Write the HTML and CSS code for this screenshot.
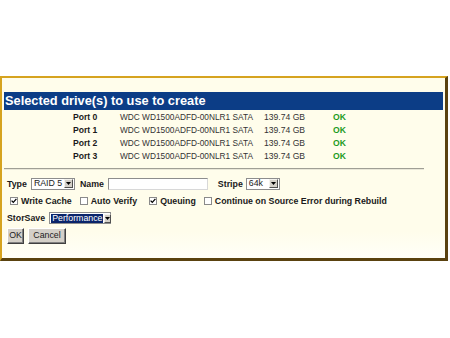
FILE: index.html
```html
<!DOCTYPE html>
<html>
<head>
<meta charset="utf-8">
<link rel="stylesheet" href="styles.css">
</head>
<body>
<div class="panel">
  <div class="title">Selected drive(s) to use to create</div>
  <div class="drives">
    <div class="drive"><span class="port">Port 0</span><span class="model">WDC WD1500ADFD-00NLR1 SATA</span><span class="size">139.74 GB</span><span class="ok">OK</span></div>
    <div class="drive"><span class="port">Port 1</span><span class="model">WDC WD1500ADFD-00NLR1 SATA</span><span class="size">139.74 GB</span><span class="ok">OK</span></div>
    <div class="drive"><span class="port">Port 2</span><span class="model">WDC WD1500ADFD-00NLR1 SATA</span><span class="size">139.74 GB</span><span class="ok">OK</span></div>
    <div class="drive"><span class="port">Port 3</span><span class="model">WDC WD1500ADFD-00NLR1 SATA</span><span class="size">139.74 GB</span><span class="ok">OK</span></div>
  </div>
  <div class="rule"></div>
  <div class="form">
    <div class="row r-type">
      <span class="lbl">Type</span>
      <span class="sel w-raid"><span class="val">RAID 5</span><span class="drop"><svg width="5" height="3" viewBox="0 0 5 3"><path d="M0 0H5L2.5 3Z" fill="#000"/></svg></span></span>
      <span class="lbl l-name">Name</span>
      <span class="txt"></span>
      <span class="lbl l-stripe">Stripe</span>
      <span class="sel w-stripe"><span class="val">64k</span><span class="drop"><svg width="5" height="3" viewBox="0 0 5 3"><path d="M0 0H5L2.5 3Z" fill="#000"/></svg></span></span>
    </div>
    <div class="row r-checks">
      <span class="chk c1"><span class="box"><svg width="6" height="6" viewBox="0 0 6 6"><path d="M0.6 2.6L2.3 4.4L5.4 0.9" stroke="#000" stroke-width="1.3" fill="none"/></svg></span><span class="lbl">Write Cache</span></span>
      <span class="chk c2"><span class="box"></span><span class="lbl">Auto Verify</span></span>
      <span class="chk c3"><span class="box"><svg width="6" height="6" viewBox="0 0 6 6"><path d="M0.6 2.6L2.3 4.4L5.4 0.9" stroke="#000" stroke-width="1.3" fill="none"/></svg></span><span class="lbl">Queuing</span></span>
      <span class="chk c4"><span class="box"></span><span class="lbl">Continue on Source Error during Rebuild</span></span>
    </div>
    <div class="row r-save">
      <span class="lbl">StorSave</span>
      <span class="sel w-save"><span class="val hl">Performance</span><span class="drop"><svg width="5" height="3" viewBox="0 0 5 3"><path d="M0 0H5L2.5 3Z" fill="#000"/></svg></span></span>
    </div>
    <div class="row r-btns">
      <span class="btn b-ok">OK</span>
      <span class="btn b-cancel">Cancel</span>
    </div>
  </div>
</div>
</body>
</html>
```
FILE: styles.css
```css
html, body {
  margin: 0;
  padding: 0;
  background: #ffffff;
}
body {
  width: 450px;
  height: 338px;
  overflow: hidden;
  font-family: "Liberation Sans", Arial, sans-serif;
  color: #111;
}
.panel {
  margin-top: 76px;
  width: 439px;
  height: 166px;
  border-top: 2px solid #d6a31f;
  border-left: 2px solid #d6a31f;
  border-right: 3px solid #5a420f;
  border-bottom: 3px solid #5a420f;
  background: linear-gradient(to bottom, #fffdeb 0%, #fffdeb 85%, #fffff8 100%);
  padding: 14px 2px 0 2px;
  box-sizing: content-box;
}
.title {
  height: 18px;
  line-height: 18px;
  background: #0c3d86;
  color: #fff;
  font-weight: bold;
  font-size: 12.8px;
  padding-left: 1px;
  white-space: nowrap;
}
.drives {
  padding-top: 1px;
}
.drive {
  display: flex;
  height: 13px;
  line-height: 13px;
  font-size: 8.6px;
  white-space: nowrap;
}
.port {
  font-weight: bold;
  width: 47px;
  margin-left: 69px;
  color: #1a1a1a;
}
.model {
  width: 144px;
  font-size: 8.3px;
  color: #333;
}
.size {
  width: 69px;
  color: #333;
}
.ok {
  color: #1d9b1d;
  font-weight: bold;
}
.rule {
  margin: 5px 0 0 0;
  width: 420px;
  height: 1px;
  background: #a09f95;
  border-bottom: 1px solid #e9e7d8;
}
.form {
  padding-left: 3px;
  padding-top: 7px;
  font-size: 8.8px;
}
.row {
  display: flex;
  align-items: center;
  white-space: nowrap;
}
.lbl {
  font-weight: bold;
  color: #1a1a1a;
}
.r-type {
  height: 13px;
}
.sel {
  display: flex;
  align-items: center;
  height: 12px;
  box-sizing: border-box;
  background: #fff;
  border: 1px solid #8d8d8d;
  padding: 0 1px 0 1px;
  color: #222;
  font-weight: normal;
}
.sel .val {
  flex: 1;
  line-height: 9px;
  padding-left: 1px;
}
.sel .val.hl {
  background: #0a246a;
  color: #fff;
  margin-right: 1px;
}
.drop {
  width: 9px;
  height: 9px;
  box-sizing: border-box;
  background: #d4d0c8;
  border-top: 1px solid #f4f3ee;
  border-left: 1px solid #f4f3ee;
  border-right: 1px solid #505050;
  border-bottom: 1px solid #505050;
  display: flex;
  align-items: center;
  justify-content: center;
}
.w-raid {
  margin-left: 4px;
  width: 44px;
}
.l-name {
  margin-left: 5px;
}
.txt {
  margin-left: 4px;
  width: 100px;
  height: 12px;
  box-sizing: border-box;
  background: #fff;
  border: 1px solid #8d8d8d;
  border-bottom-color: #d8d8d8;
  border-right-color: #d8d8d8;
}
.l-stripe {
  margin-left: 10px;
}
.w-stripe {
  margin-left: 3px;
  width: 34px;
}
.r-checks {
  margin-top: 5px;
  height: 12px;
}
.chk {
  display: flex;
  align-items: center;
}
.box {
  width: 8px;
  height: 8px;
  box-sizing: border-box;
  border: 1px solid #8a8a8a;
  background: #fff;
  margin-right: 3px;
  display: flex;
  align-items: center;
  justify-content: center;
}
.box svg {
  flex: none;
}
.c1 { margin-left: 3px; }
.c2 { margin-left: 8px; }
.c3 { margin-left: 12px; }
.c4 { margin-left: 8px; }
.r-save {
  margin-top: 5px;
  height: 12px;
}
.w-save {
  margin-left: 4px;
  width: 62px;
  height: 12px;
}
.r-btns {
  margin-top: 4px;
  height: 16px;
}
.btn {
  height: 16px;
  box-sizing: border-box;
  line-height: 13px;
  text-align: center;
  background: #d4d0c8;
  border-top: 1px solid #ffffff;
  border-left: 1px solid #ffffff;
  border-right: 1px solid #404040;
  border-bottom: 1px solid #404040;
  box-shadow: inset -1px -1px 0 #808080;
  color: #222;
  font-size: 8.8px;
}
.b-ok {
  width: 17px;
}
.b-cancel {
  width: 38px;
  margin-left: 4px;
}
```
